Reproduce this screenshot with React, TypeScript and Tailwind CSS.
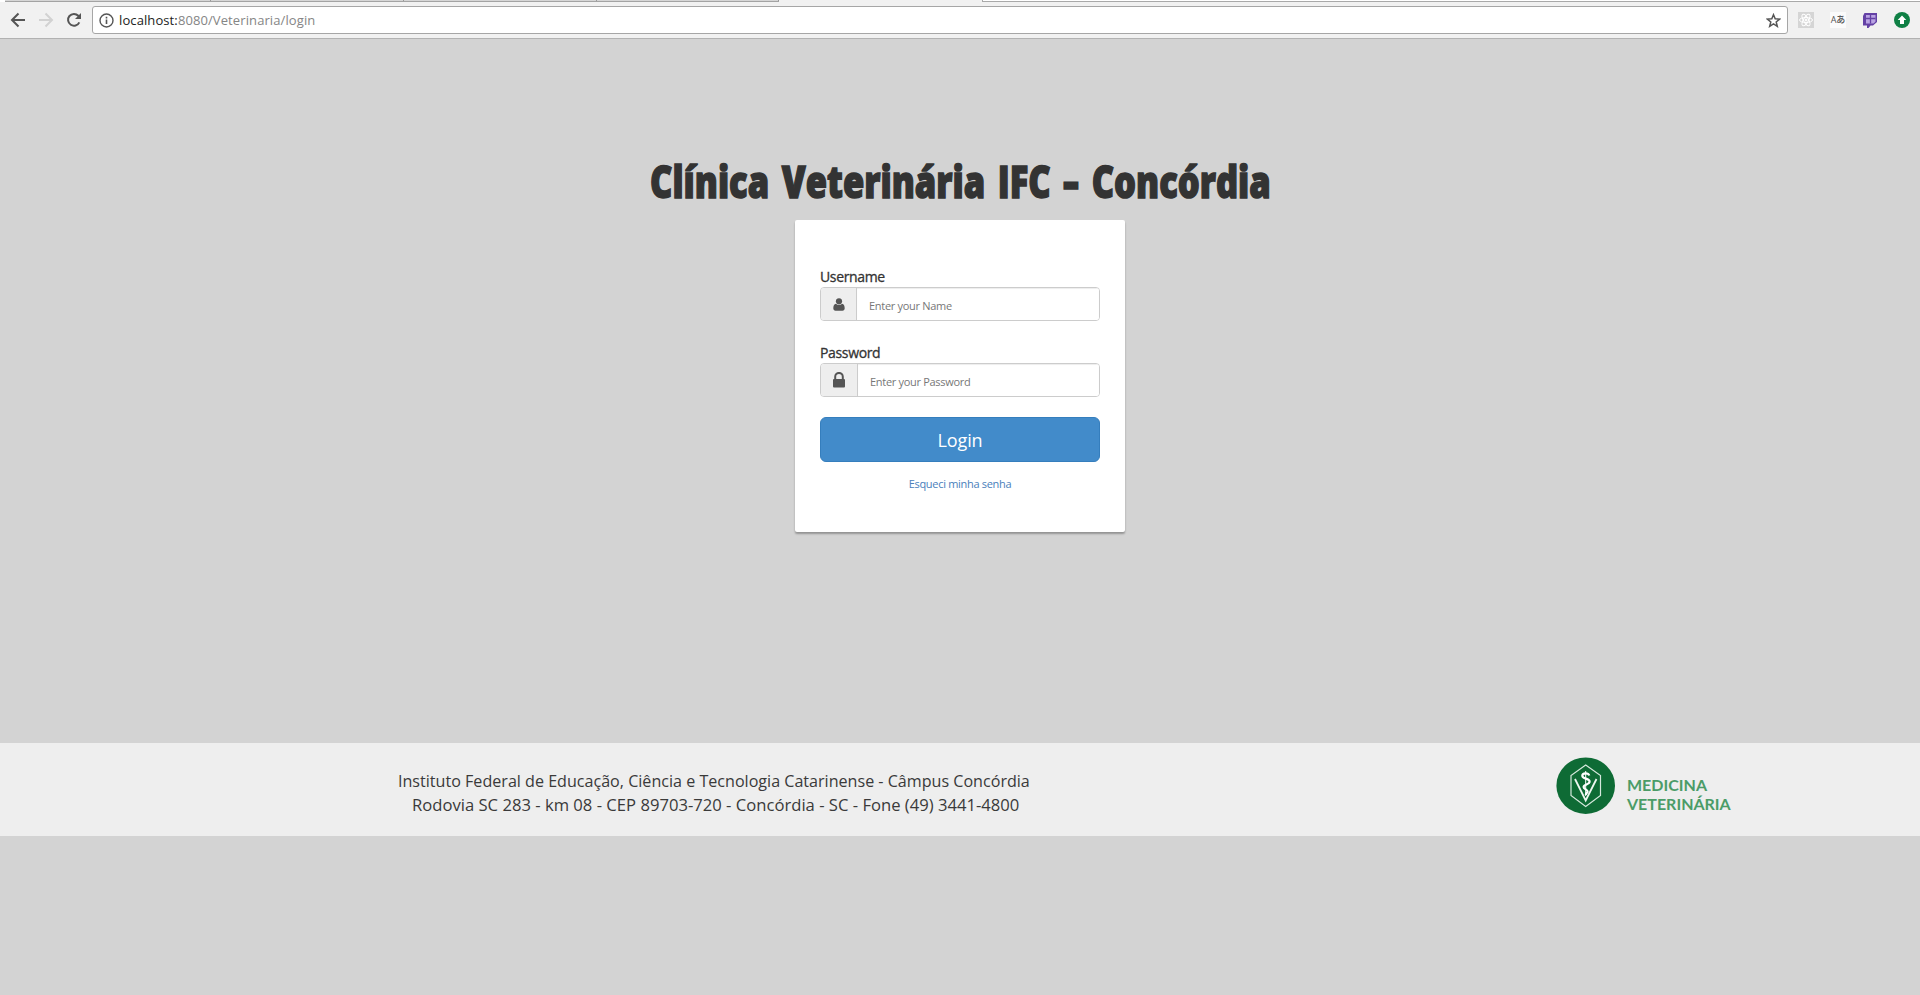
import type { ReactNode } from "react";

function UserGlyph() {
  return (
    <svg width="12" height="13" viewBox="0 0 12 13" fill="currentColor">
      <circle cx="6" cy="3.3" r="3.1" />
      <path d="M3 5.800C1 6.200.3 8 .3 10.300.3 11.900 1.200 12.700 2.500 12.700h7c1.300 0 2.200-.8 2.200-2.400C11.700 8 11 6.200 9 5.800 7.400 7.500 4.600 7.500 3 5.800z" />
    </svg>
  );
}

function LockGlyph() {
  return (
    <svg width="12" height="16" viewBox="0 0 12 16" fill="currentColor">
      <path d="M2.200 8V4.700a3.800 3.800 0 0 1 7.600 0V8" fill="none" stroke="currentColor" strokeWidth="2" />
      <rect x="0" y="7" width="12" height="8.500" rx="1" />
    </svg>
  );
}

type FieldProps = { label: string; placeholder: string; type: string; addon: string; children: ReactNode };

function Field({ label, placeholder, type, addon, children }: FieldProps) {
  return (
    <label className="block h-[76px]">
      <span className="block h-[18px] text-[14px] leading-[16px] tracking-[-0.35px] text-[#333] [-webkit-text-stroke:0.3px_#333]">
        {label}
      </span>
      <span className="flex h-[34px] overflow-hidden rounded border border-[#ccc]">
        <span className={`flex items-center justify-center border-r border-[#ccc] bg-[#eee] text-[#555] ${addon}`}>
          {children}
        </span>
        <input
          type={type}
          placeholder={placeholder}
          className="min-w-0 flex-1 bg-white px-3 pt-[5px] text-[11px] tracking-[-0.3px] shadow-[inset_0_1px_1px_rgba(0,0,0,0.075)] outline-none placeholder:text-[#777]"
        />
      </span>
    </label>
  );
}

function TabStrip() {
  return (
    <div className="flex h-[2px] bg-[#f1f1f1]">
      <div className="w-[5px] bg-white" />
      <div className="flex w-[774px] border-b border-[#a3a3a3] bg-[#d6d6d6]">
        <div className="w-[206px] border-r border-[#999]" />
        <div className="w-[193px] border-r border-[#999]" />
        <div className="w-[193px] border-r border-[#999]" />
        <div className="flex-1 border-r border-[#999]" />
      </div>
      <div className="w-[203px]" />
      <div className="flex-1 border-b border-l border-[#a9a9a9] bg-white" />
    </div>
  );
}

function Toolbar() {
  return (
    <div className="flex h-[37px] items-center border-b border-[#b2b2b2] bg-[#f1f1f1] pl-[10px]">
      <div className="flex w-[82px] gap-3">
        <svg width="16" height="16" viewBox="0 0 16 16" fill="none" stroke="#555" strokeWidth="2">
          <path d="M15 8H2.500M8.500 1.500 2 8l6.500 6.500" />
        </svg>
        <svg width="16" height="16" viewBox="0 0 16 16" fill="none" stroke="#d2d2d2" strokeWidth="2">
          <path d="M1 8h12.500M7.500 1.500 14 8l-6.500 6.500" />
        </svg>
        <svg width="16" height="16" viewBox="0 0 16 16" fill="none" stroke="#555" strokeWidth="2">
          <path d="M13.300 10.300A5.900 5.900 0 1 1 12.300 3.800L14 5.500" />
          <path d="M15 1v6H9z" fill="#555" stroke="none" />
        </svg>
      </div>
      <div className="flex h-7 w-[1696px] items-center rounded-[3px] border border-[#a6a6a6] bg-white pl-[6px] pr-[6px]">
        <svg width="15" height="15" viewBox="0 0 15 15" fill="none" stroke="#555">
          <circle cx="7.500" cy="7.500" r="6.500" strokeWidth="1.400" />
          <path d="M7.500 6.500V11M7.500 3.800v1.600" strokeWidth="1.600" />
        </svg>
        <span className="ml-[5px] flex-1 text-[13px] leading-[18px] tracking-[0.1px] text-[#858585]">
          <span className="text-[#222]">localhost:</span>8080/Veterinaria/login
        </span>
        <svg width="15" height="15" viewBox="0 0 15 15" fill="none" stroke="#555" strokeWidth="1.500">
          <path d="m7.500 1.700 1.700 4.100 4.400.3-3.400 2.900 1.100 4.300-3.800-2.400-3.800 2.400 1.100-4.300L1.400 6.100l4.400-.3z" />
        </svg>
      </div>
      <div className="flex items-center gap-4 pl-[10px]">
        <svg width="16" height="16" viewBox="0 0 16 16" fill="none" stroke="#fff" strokeWidth="1">
          <path d="M0 0h16v16H0z" fill="#d5d5d5" stroke="none" />
          <ellipse cx="8" cy="8" rx="6.500" ry="2.500" />
          <ellipse cx="8" cy="8" rx="6.500" ry="2.500" transform="rotate(60 8 8)" />
          <ellipse cx="8" cy="8" rx="6.500" ry="2.500" transform="rotate(120 8 8)" />
          <circle cx="8" cy="8" r="1" fill="#fff" />
        </svg>
        <span className="flex h-4 w-4 items-center justify-center overflow-hidden bg-[#fbfbfb] font-['Open_Sans','Noto_Sans_CJK_JP',sans-serif] text-[9px] leading-4 font-medium whitespace-nowrap text-[#555]">
          Aあ
        </span>
        <svg width="16" height="16" viewBox="0 0 16 16">
          <path d="M2.500 1H15v9l-4 3.500H8.500L6.500 16H5v-2.500H1V4z" fill="#6441a5" />
          <path d="M4 3h9.500v6.800l-2 1.700H4z" fill="#b9a3e3" />
          <path d="M4 6.500h9.500M8.500 3v8.500" stroke="#6441a5" strokeWidth="1.300" />
        </svg>
        <svg width="16" height="16" viewBox="0 0 16 16">
          <circle cx="8" cy="8" r="8" fill="#0f8045" />
          <path d="m8 3.500 4.300 4.500H10v4H6V8H3.700z" fill="#fff" />
        </svg>
      </div>
    </div>
  );
}

function CourseLogo() {
  return (
    <div className="flex">
      <svg width="60" height="58" viewBox="0 0 60 58" fill="none" stroke="#fff">
        <ellipse cx="29.700" cy="28.700" rx="29.300" ry="28.300" fill="#0e6b35" stroke="none" />
        <path d="M29.700 8 44.500 18.500v20L29.700 49.500 15 38.500v-20z" stroke="#d5e8dc" strokeWidth="1.200" />
        <path d="M19 22 29.700 43.500 40.500 22" stroke="#eef6f0" strokeWidth="1.800" />
        <path d="M29.700 14v25" strokeWidth="1" />
        <path d="M33.300 18.500c-1-3-7-3-7 .3 0 3.500 7.300 2.200 7.300 5.700 0 3.300-6 2.500-6 5.500 0 2.500 4 2.200 4 4.500 0 1.500-1.800 1.700-1.800 3.500" strokeWidth="2.200" />
      </svg>
      <div className="pt-[18px] pl-[11px] font-['Lato',sans-serif] text-[16px] leading-[19px] font-bold whitespace-nowrap text-[#4b9c67]">
        <div className="w-max origin-left">MEDICINA</div>
        <div className="w-max origin-left">VETERINÁRIA</div>
      </div>
    </div>
  );
}

export default function App() {
  return (
    <div className="flex h-[995px] w-full flex-col overflow-hidden bg-[#d3d3d3] font-['Open_Sans',sans-serif]">
      <TabStrip />
      <Toolbar />
      <main className="flex h-[704px] flex-col items-center">
        <h1 className="mt-[113px] h-[68px] scale-x-[0.793] text-[43.500px] leading-[60px] font-extrabold whitespace-nowrap text-[#333] [-webkit-text-stroke:1.500px_#333] [word-spacing:4.600px]">
          Clínica Veterinária IFC <span className="mx-[3px] inline-block scale-x-[1.400]">-</span> Concórdia
        </h1>
        <form className="h-[312px] w-[330px] rounded-[2px] bg-white px-[25px] pt-[49px] shadow-[0_2px_2px_rgba(0,0,0,0.3)]">
          <Field label="Username" placeholder="Enter your Name" type="text" addon="w-[36px]">
            <UserGlyph />
          </Field>
          <Field label="Password" placeholder="Enter your Password" type="password" addon="w-[37px]">
            <LockGlyph />
          </Field>
          <button
            type="button"
            className="mt-[-4px] block h-[45px] w-full rounded-md border border-[#357ebd] bg-[#428bca] text-[18px] leading-6 tracking-[-0.1px] text-white"
          >
            Login
          </button>
          <a href="#" className="mt-[14px] block text-center text-[11px] leading-4 tracking-[-0.300px] text-[#4a80bb]">
            Esqueci minha senha
          </a>
        </form>
      </main>
      <footer className="flex h-[93px] justify-between bg-[#eee] pr-[188px] pl-[398px] text-[#3a3a3a]">
        <div className="w-[632px] pt-[26px] text-[17px] leading-6 whitespace-nowrap">
          <p className="w-max origin-left scale-x-[0.947]">
            Instituto Federal de Educação, Ciência e Tecnologia Catarinense - Câmpus Concórdia
          </p>
          <p className="ml-[14px] w-max origin-left scale-x-[0.978]">
            Rodovia SC 283 - km 08 - CEP 89703-720 - Concórdia - SC - Fone (49) 3441-4800
          </p>
        </div>
        <div className="w-[176px] pt-[14px]">
          <CourseLogo />
        </div>
      </footer>
    </div>
  );
}
